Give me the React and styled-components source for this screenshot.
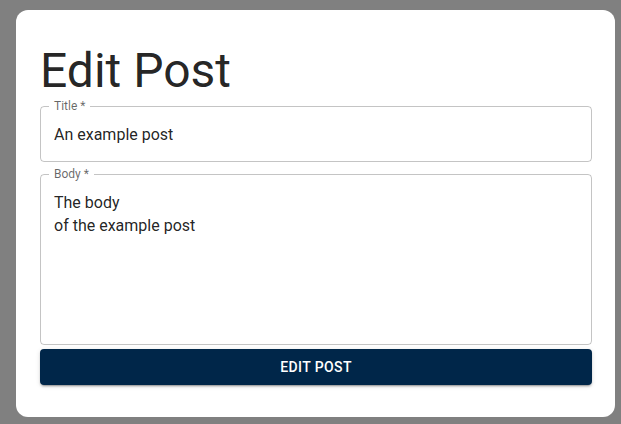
import styled, {createGlobalStyle} from 'styled-components';

const GlobalStyle = createGlobalStyle`
  html, body {
    margin: 0;
    padding: 0;
    background: #808080;
  }
  body {
    font-family: Roboto, "Noto Sans", sans-serif;
  }
`;

const Page = styled.div`
  display: flex;
  padding: 10px 6px 7px 16px;
  min-height: 424px;
  box-sizing: border-box;
`;

const Card = styled.form`
  flex: 1;
  display: flex;
  flex-direction: column;
  background: #fff;
  border-radius: 12px;
  padding: 33px 23px 32px 24px;
`;

const Heading = styled.h1`
  margin: 0;
  font-size: 48px;
  font-weight: 400;
  line-height: 56px;
  color: rgba(0, 0, 0, 0.87);
`;

const Field = styled.fieldset`
  margin: ${({$gap}) => $gap}px 0 0;
  padding: 0 8px;
  border: 1px solid rgba(0, 0, 0, 0.23);
  border-radius: 4px;
  min-width: 0;
`;

const Legend = styled.legend`
  padding: 0 5px;
  font-size: 12px;
  line-height: 12px;
  color: rgba(0, 0, 0, 0.6);
`;

const Input = styled.input`
  display: block;
  width: 100%;
  box-sizing: border-box;
  border: 0;
  outline: 0;
  margin: 0;
  padding: 10.5px 5px 15.5px;
  height: 49px;
  font: inherit;
  font-size: 16px;
  line-height: 23px;
  color: rgba(0, 0, 0, 0.87);
  background: transparent;
`;

const TextArea = styled.textarea`
  display: block;
  width: 100%;
  box-sizing: border-box;
  border: 0;
  outline: 0;
  margin: 0;
  padding: 10.5px 5px 15.5px;
  height: ${({$rows}) => $rows * 23 + 26}px;
  resize: none;
  font: inherit;
  font-size: 16px;
  line-height: 23px;
  color: rgba(0, 0, 0, 0.87);
  background: transparent;
`;

const SubmitButton = styled.button`
  margin-top: 4px;
  height: 36px;
  border: 0;
  border-radius: 4px;
  background: #002649;
  color: #fff;
  font-family: Roboto, "Noto Sans", sans-serif;
  font-size: 14px;
  font-weight: 500;
  letter-spacing: 0.4px;
  text-transform: uppercase;
  box-shadow: 0 3px 1px -2px rgba(0, 0, 0, 0.2), 0 2px 2px 0 rgba(0, 0, 0, 0.14), 0 1px 5px 0 rgba(0, 0, 0, 0.12);
  cursor: pointer;
`;

const App = () => {
    return (
        <Page>
            <GlobalStyle />
            <Card onSubmit={(e) => e.preventDefault()}>
                <Heading>Edit Post</Heading>
                <Field $gap={1}>
                    <Legend>Title *</Legend>
                    <Input defaultValue="An example post" />
                </Field>
                <Field $gap={6}>
                    <Legend>Body *</Legend>
                    <TextArea $rows={6} defaultValue={'The body\nof the example post'} />
                </Field>
                <SubmitButton type="submit">Edit Post</SubmitButton>
            </Card>
        </Page>
    );
};

export default App;
